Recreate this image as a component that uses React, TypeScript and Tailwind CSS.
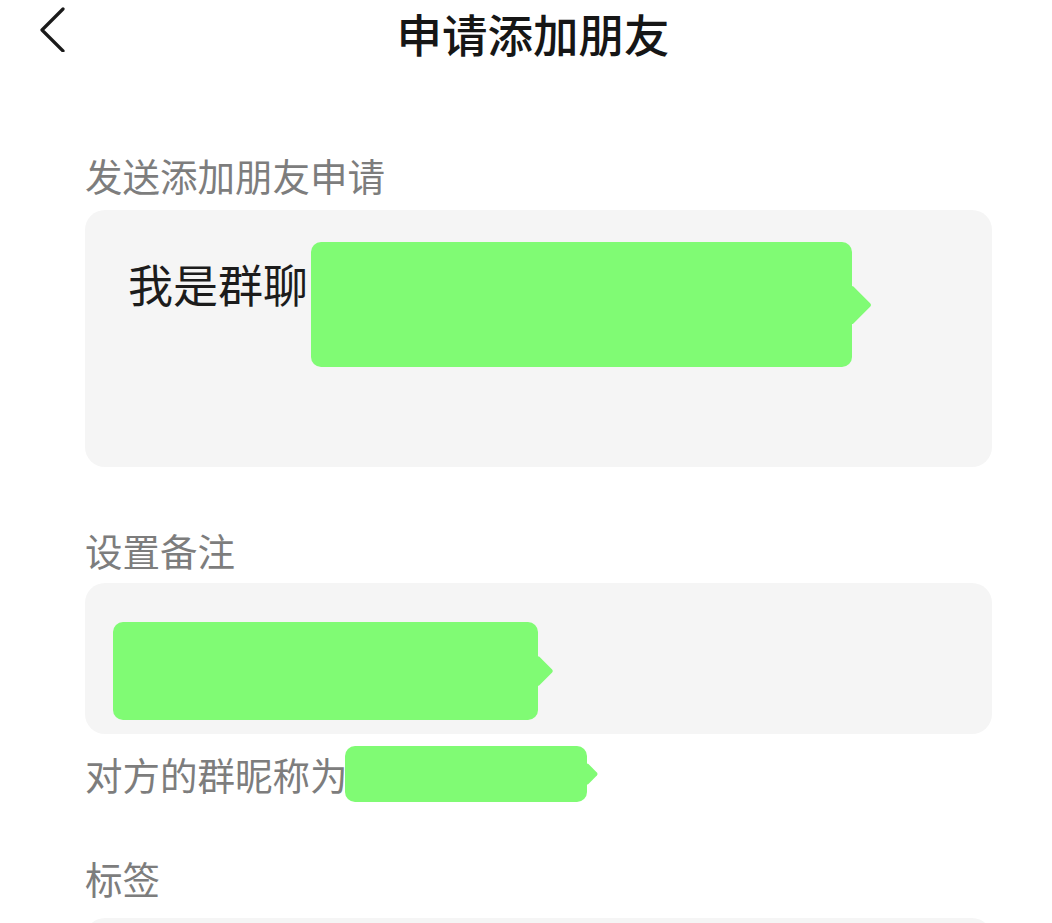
const FONT = "font-['Noto_Sans_CJK_SC','Noto_Sans',sans-serif]";

// green speech-bubble style block with a small pointer on the right
function Bubble({ className, tipClass }: { className: string; tipClass: string }) {
  return (
    <div className={`relative shrink-0 rounded-[10px] bg-[#80fb74] ${className}`}>
      <div className={`absolute top-1/2 -translate-y-1/2 rotate-45 rounded-[2px] bg-[#80fb74] ${tipClass}`} />
    </div>
  );
}

function Label({ children, className = "" }: { children: React.ReactNode; className?: string }) {
  return <p className={`text-[37.5px] leading-[56px] text-[#7d7d7d] ${className}`}>{children}</p>;
}

export default function App() {
  return (
    <div className={`h-[923px] w-[1052px] overflow-hidden bg-white ${FONT}`}>
      <header className="relative flex h-[66px] items-start justify-center">
        <button type="button" className="absolute left-[34px] top-[2px] p-1 text-[#1a1a1a]">
          <svg width="30" height="46" viewBox="0 0 30 46" fill="none">
            <path d="M25 3 L4 24 L25 45" stroke="currentColor" strokeWidth="3.2" strokeLinecap="round" strokeLinejoin="round" />
          </svg>
        </button>
        <h1 className="ml-[14px] text-[45.5px] font-medium leading-[66px] text-[#161616]">申请添加朋友</h1>
      </header>

      <main className="pl-[85px] pr-[60px]">
        <Label className="mt-[81px]">发送添加朋友申请</Label>
        <div className="mt-[7px] h-[257px] rounded-[20px] bg-[#f5f5f5] pl-[43px] pt-[32px]">
          <div className="flex items-start">
            <span className="mt-[9px] text-[45px] leading-[66px] text-[#1c1c1c]">我是群聊</span>
            <Bubble className="ml-[3px] h-[125px] w-[541px]" tipClass="-right-[14px] h-[28px] w-[28px]" />
          </div>
        </div>

        <Label className="mt-[55px]">设置备注</Label>
        <div className="mt-[5px] h-[151px] rounded-[20px] bg-[#f5f5f5] pl-[28px] pt-[39px]">
          <Bubble className="h-[98px] w-[425px]" tipClass="-right-[11px] h-[22px] w-[22px]" />
        </div>

        <div className="mt-[12px] flex items-center">
          <Label>对方的群昵称为</Label>
          <Bubble className="-ml-[3px] h-[56px] w-[242px]" tipClass="-right-[8px] h-[16px] w-[16px]" />
        </div>

        <Label className="mt-[48px]">标签</Label>
        <div className="mt-[12px] h-[120px] rounded-[20px] bg-[#f5f5f5]" />
      </main>
    </div>
  );
}
